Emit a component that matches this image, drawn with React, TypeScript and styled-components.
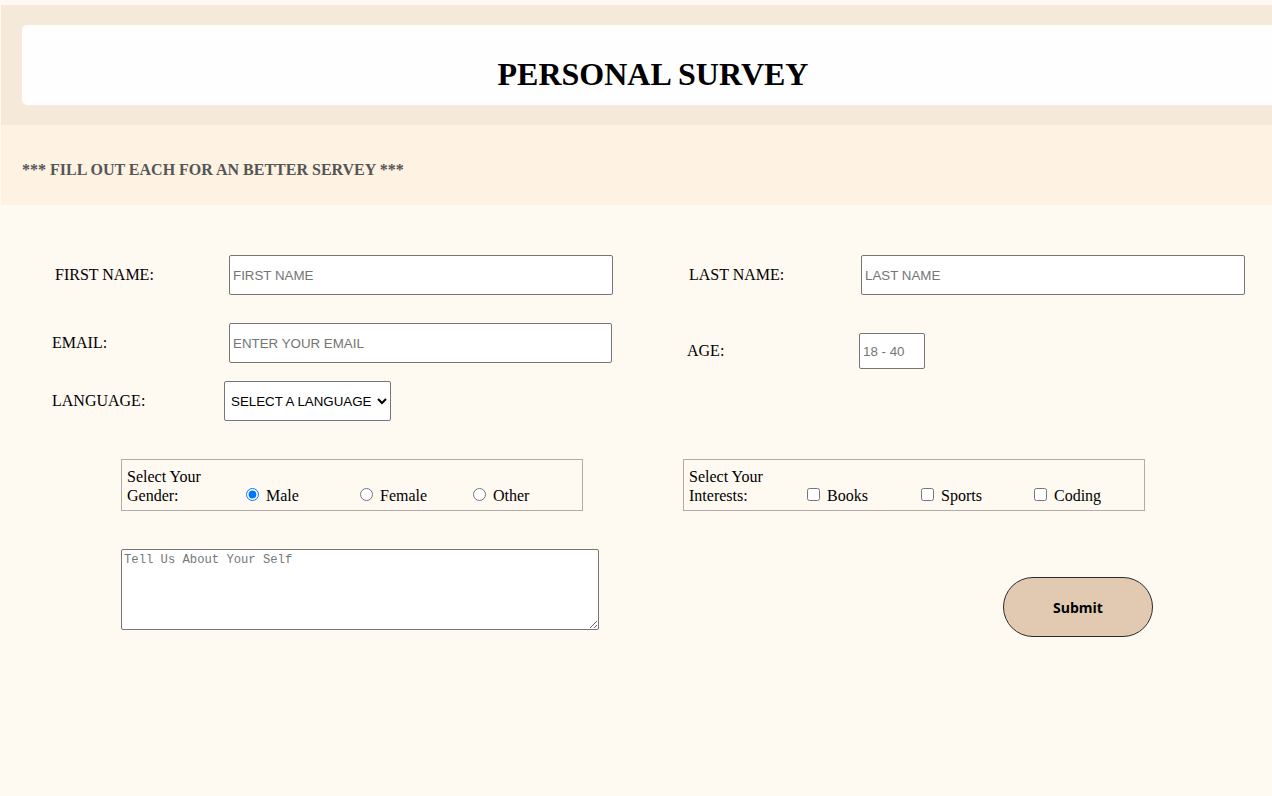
import React from "react";
import styled, { createGlobalStyle } from "styled-components";

const Global = createGlobalStyle`
  html, body { margin: 0; padding: 0; }
  body {
    background: #fef9f1;
    font-family: "Liberation Serif", "Times New Roman", serif;
    color: #000;
    overflow-x: hidden;
  }
  * { box-sizing: border-box; }
`;

const Page = styled.div`
  min-height: 100vh;
  padding-top: 5px;
  background: #fef9f1;
`;

const HeaderBand = styled.header`
  background: #f5eada;
  padding: 20px 0 20px 21px;
  margin-left: 1px;
  overflow: hidden;
  display: flex;
`;

const TitleCard = styled.div`
  background: #fefefe;
  height: 80px;
  width: 1262px;
  flex-shrink: 0;
  border-radius: 5px;
  display: flex;
  align-items: center;
  justify-content: center;
`;

const Title = styled.h1`
  margin: 18px 0 0 0;
  font-size: 32px;
  font-weight: 700;
  font-family: "Liberation Serif", "Times New Roman", serif;
`;

const NoteBand = styled.div`
  background: #fef2e2;
  height: 80px;
  margin-left: 1px;
  padding-left: 21px;
  display: flex;
  align-items: center;
`;

const Note = styled.h4`
  margin: 10px 0 0 0;
  font-size: 16px;
  font-weight: 700;
  color: #555;
`;

const Form = styled.form`
  display: flex;
  flex-direction: column;
  padding-top: 50px;
`;

const TwoCols = styled.div<{ $top?: number }>`
  display: grid;
  grid-template-columns: 635px 637px;
  align-items: start;
  margin-top: ${(p) => p.$top ?? 0}px;
`;

const Column = styled.div`
  display: flex;
  flex-direction: column;
`;

const FieldRow = styled.div<{ $top: number; $indent: number }>`
  display: flex;
  align-items: center;
  margin-top: ${(p) => p.$top}px;
  padding-left: ${(p) => p.$indent}px;
`;

const Label = styled.label<{ $width: number }>`
  width: ${(p) => p.$width}px;
  font-size: 16px;
  flex-shrink: 0;
`;

const TextInput = styled.input<{ $width: number; $height: number }>`
  width: ${(p) => p.$width}px;
  height: ${(p) => p.$height}px;
  border: 1px solid #767676;
  border-radius: 2px;
  background: #fff;
  padding: 1px 3px;
  font-family: "Liberation Sans", Arial, sans-serif;
  font-size: 13.33px;
  &::placeholder { color: #757575; }
  &::-webkit-inner-spin-button { display: none; }
`;

const Select = styled.select`
  width: 167px;
  height: 40px;
  border: 1px solid #767676;
  border-radius: 2px;
  background: #fff;
  font-family: "Liberation Sans", Arial, sans-serif;
  font-size: 13.33px;
  color: #000;
  padding: 0 2px;
`;

const Fieldset = styled.fieldset<{ $left: number }>`
  margin: 0 0 0 ${(p) => p.$left}px;
  width: 462px;
  height: 52px;
  border: 1px solid #b1aca7;
  padding: 8px 5px 5px 5px;
  display: flex;
  align-items: flex-end;
`;

const Legendish = styled.div<{ $width: number }>`
  width: ${(p) => p.$width}px;
  font-size: 16px;
  line-height: 18.5px;
  flex-shrink: 0;
`;

const Option = styled.label<{ $width: number }>`
  width: ${(p) => p.$width}px;
  display: flex;
  align-items: center;
  gap: 7px;
  font-size: 16px;
  line-height: 18.5px;
  flex-shrink: 0;
  input {
    margin: 0;
    width: 13px;
    height: 13px;
    position: relative;
    top: -1px;
  }
`;

const TextArea = styled.textarea`
  margin: 0 0 0 121px;
  width: 478px;
  height: 81px;
  border: 1px solid #767676;
  border-radius: 2px;
  background: #fff;
  padding: 3px 2px;
  font-family: "Liberation Mono", monospace;
  font-size: 12.2px;
  &::placeholder { color: #777; }
`;

const SubmitButton = styled.button`
  margin: 28px 0 0 368px;
  width: 150px;
  height: 60px;
  border: 1px solid #2b2b2b;
  border-radius: 30px;
  background: #e2cab2;
  font-family: "Open Sans", Arial, sans-serif;
  font-weight: 700;
  font-size: 14px;
  color: #000;
`;

export default function App() {
  return (
    <>
      <Global />
      <Page>
        <HeaderBand>
          <TitleCard>
            <Title>PERSONAL SURVEY</Title>
          </TitleCard>
        </HeaderBand>
        <NoteBand>
          <Note>*** FILL OUT EACH FOR AN BETTER SERVEY ***</Note>
        </NoteBand>
        <Form onSubmit={(e) => e.preventDefault()}>
          <TwoCols>
            <Column>
              <FieldRow $top={0} $indent={55}>
                <Label $width={174}>FIRST NAME:</Label>
                <TextInput $width={384} $height={40} placeholder="FIRST NAME" />
              </FieldRow>
              <FieldRow $top={28} $indent={52}>
                <Label $width={177}>EMAIL:</Label>
                <TextInput $width={383} $height={40} placeholder="ENTER YOUR EMAIL" />
              </FieldRow>
              <FieldRow $top={18} $indent={52}>
                <Label $width={172}>LANGUAGE:</Label>
                <Select defaultValue="">
                  <option value="">SELECT A LANGUAGE</option>
                  <option>ENGLISH</option>
                  <option>HINDI</option>
                </Select>
              </FieldRow>
            </Column>
            <Column>
              <FieldRow $top={0} $indent={54}>
                <Label $width={172}>LAST NAME:</Label>
                <TextInput $width={384} $height={40} placeholder="LAST NAME" />
              </FieldRow>
              <FieldRow $top={38} $indent={52}>
                <Label $width={172}>AGE:</Label>
                <TextInput type="number" $width={66} $height={36} placeholder="18 - 40" />
              </FieldRow>
            </Column>
          </TwoCols>
          <TwoCols $top={38}>
            <Fieldset $left={121}>
              <Legendish $width={119}>Select Your Gender:</Legendish>
              <Option $width={114}>
                <input type="radio" name="g" defaultChecked /> Male
              </Option>
              <Option $width={113}>
                <input type="radio" name="g" /> Female
              </Option>
              <Option $width={80}>
                <input type="radio" name="g" /> Other
              </Option>
            </Fieldset>
            <Fieldset $left={48}>
              <Legendish $width={118}>Select Your Interests:</Legendish>
              <Option $width={114}>
                <input type="checkbox" /> Books
              </Option>
              <Option $width={113}>
                <input type="checkbox" /> Sports
              </Option>
              <Option $width={80}>
                <input type="checkbox" /> Coding
              </Option>
            </Fieldset>
          </TwoCols>
          <TwoCols $top={38}>
            <TextArea placeholder="Tell Us About Your Self" />
            <div>
              <SubmitButton type="submit">Submit</SubmitButton>
            </div>
          </TwoCols>
        </Form>
      </Page>
    </>
  );
}
